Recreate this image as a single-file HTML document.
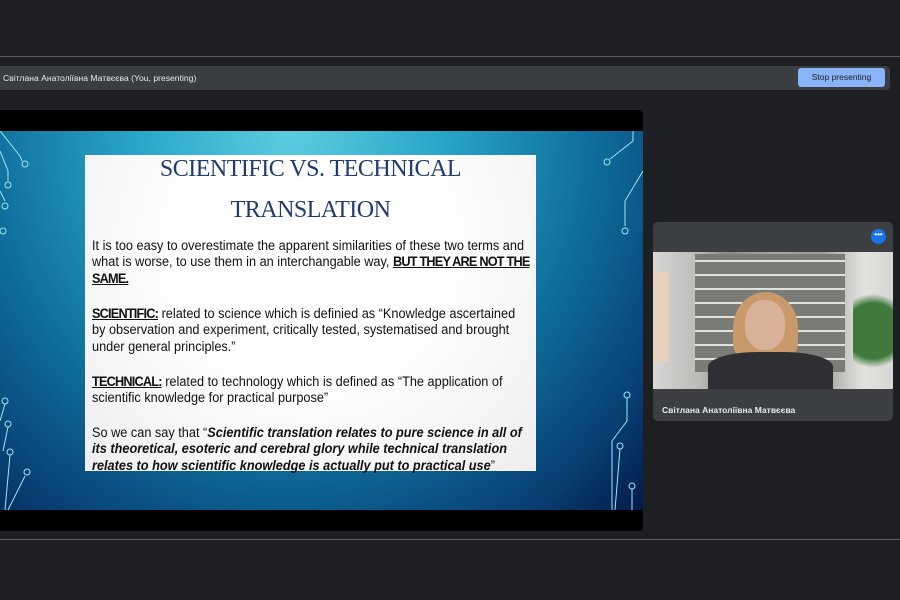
<!DOCTYPE html>
<html><head><meta charset="utf-8"><style>
*{margin:0;padding:0;box-sizing:border-box}
body{width:900px;height:600px;background:#1e1f22;position:relative;overflow:hidden;font-family:"Liberation Sans",sans-serif}
.abs{position:absolute}
.line{left:0;width:900px;height:1px;background:#5a5d61}
.bar{left:0;top:66px;width:890px;height:24px;background:#3a3d41;border-radius:0 4px 4px 0}
.bar span{position:absolute;left:3px;top:7px;font-size:8.6px;color:#e8eaed;white-space:nowrap}
.btn{left:798px;top:68px;width:87px;height:19px;background:#8ab4f8;border-radius:3px;font-size:8.5px;color:#202124;text-align:center;line-height:19px}
.panel{left:0;top:110px;width:643px;height:421px;background:#000;border-radius:0 4px 4px 0}
.slide{left:0;top:131px;width:643px;height:379px;background:radial-gradient(ellipse at 45% 0%,#5ccde0 0%,#2aa6c8 30%,#0f6f9c 60%,#083e72 85%,#021a4a 100%)}
.box{left:85px;top:155px;width:451px;height:316px;background:radial-gradient(ellipse at 50% 30%,#ffffff 40%,#eeeeee 100%)}
.t{position:absolute;width:100%;text-align:center;font-family:"Liberation Serif",serif;color:#1f3c6e;font-size:24px;letter-spacing:-0.5px}
.p{position:absolute;left:7px;white-space:nowrap;font-family:"Liberation Sans",sans-serif;font-size:13.4px;line-height:16.3px;color:#111;transform:scaleX(0.95);transform-origin:left top}
.c{letter-spacing:-0.85px}
.tile{left:653px;top:222px;width:240px;height:199px;background:#3c4043;border-radius:5px;overflow:hidden}
.vid{left:0;top:30px;width:240px;height:137px;background:linear-gradient(90deg,#d8d8d6 0%,#cfcfcd 5%,#b9bab6 20%,#8a8b87 30%,#a7a8a4 50%,#9c9c98 70%,#cfd0cc 82%,#e2e2df 88%,#d7d7d4 100%)}
</style></head><body>
<div class="abs line" style="top:56px"></div>
<div class="abs line" style="top:539px"></div>
<div class="abs bar"><span>Світлана Анатоліївна Матвєєва (You, presenting)</span></div>
<div class="abs btn">Stop presenting</div>
<div class="abs panel"></div>
<div class="abs slide">
<svg width="643" height="379" style="position:absolute;left:0;top:0" fill="none" stroke="#9fe6f4" stroke-width="1">
<path d="M0 0 L20 25 L22 30"/><circle cx="25" cy="33" r="3"/>
<path d="M0 20 L8 40 L8 50"/><circle cx="8" cy="54" r="3"/>
<path d="M0 60 L5 70"/><circle cx="5" cy="75" r="3"/>
<circle cx="3" cy="100" r="3"/>
<path d="M633 0 L633 10 L610 28"/><circle cx="607" cy="31" r="3"/>
<path d="M643 40 L625 70 L625 95"/><circle cx="625" cy="100" r="3"/>
<circle cx="5" cy="270" r="3"/><path d="M5 273 L0 290"/>
<circle cx="8" cy="293" r="3"/><path d="M8 296 L3 320"/>
<circle cx="10" cy="321" r="3"/><path d="M10 324 L5 379"/>
<path d="M8 379 L25 345"/><circle cx="27" cy="341" r="3"/>
<circle cx="627" cy="264" r="3"/><path d="M627 267 L627 290 L612 310 L612 379"/>
<circle cx="620" cy="315" r="3"/><path d="M620 318 L615 379"/>
<circle cx="632" cy="355" r="3"/><path d="M632 358 L632 379"/>
</svg>
</div>
<div class="abs box">
<div class="t" style="top:1px">SCIENTIFIC VS. TECHNICAL</div>
<div class="t" style="top:42px">TRANSLATION</div>
<div class="p" style="top:83px">It is too easy to overestimate the apparent similarities of these two terms and<br>what is worse, to use them in an interchangable way, <b class="c"><u>BUT THEY ARE NOT THE</u></b><br><b class="c"><u>SAME.</u></b></div>
<div class="p" style="top:151px"><b class="c"><u>SCIENTIFIC:</u></b> related to science which is definied as “Knowledge ascertained<br>by observation and experiment, critically tested, systematised and brought<br>under general principles.”</div>
<div class="p" style="top:219px"><b class="c"><u>TECHNICAL:</u></b> related to technology which is defined as “The application of<br>scientific knowledge for practical purpose”</div>
<div class="p" style="top:270px">So we can say that “<b><i>Scientific translation relates to pure science in all of<br>its theoretical, esoteric and cerebral glory while technical translation<br>relates to how scientific knowledge is actually put to practical use</i></b>”</div>
</div>
<div class="abs tile">
<div class="abs" style="right:7px;top:7px;width:15px;height:15px;border-radius:50%;background:#1a73e8;color:#fff;font-size:8px;line-height:11px;text-align:center;font-weight:bold">•••</div>
<div class="abs vid">
<div class="abs" style="left:42px;top:2px;width:150px;height:118px;background:repeating-linear-gradient(0deg,#7a7c78 0 12px,#e0e0dc 12px 14px)"></div>
<div class="abs" style="left:0;top:20px;width:16px;height:90px;background:#e6d2bc"></div>
<div class="abs" style="left:200px;top:40px;width:40px;height:97px;background:radial-gradient(circle at 50% 40%,#3f7a3c 0 45%,transparent 60%)"></div>
<div class="abs" style="left:80px;top:40px;width:65px;height:72px;border-radius:50% 50% 30% 30%;background:#c8996a"></div>
<div class="abs" style="left:92px;top:48px;width:40px;height:50px;border-radius:45%;background:#d9b098"></div>
<div class="abs" style="left:55px;top:100px;width:125px;height:37px;border-radius:40% 40% 0 0;background:#2e2f33"></div>
</div>
<div class="abs" style="left:9px;top:183px;font-size:8.5px;color:#e8eaed;font-weight:bold">Світлана Анатоліївна Матвєєва</div>
</div>
</body></html>
